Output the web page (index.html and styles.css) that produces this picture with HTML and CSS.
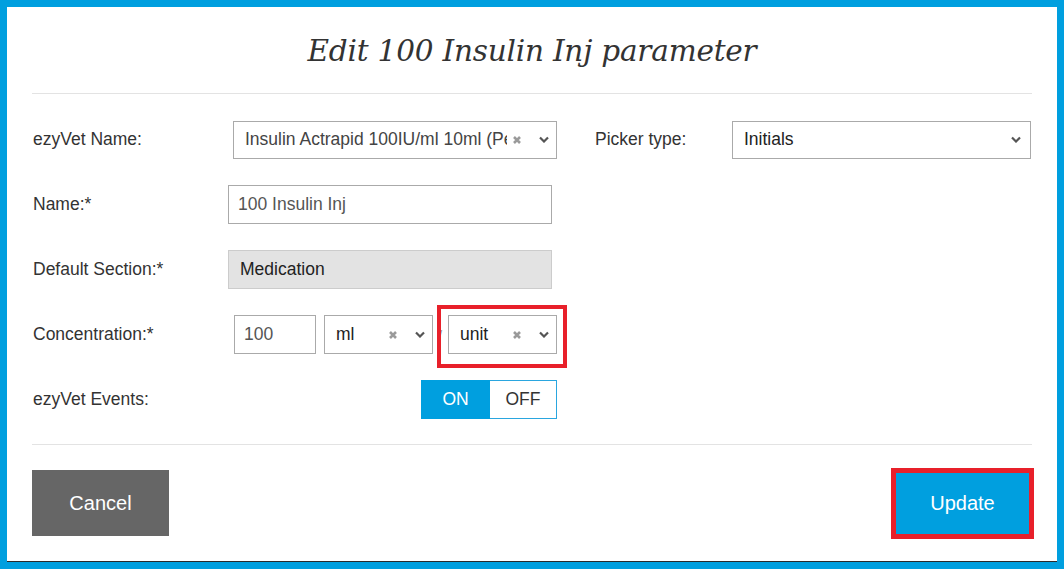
FILE: index.html
```html
<!DOCTYPE html>
<html>
<head>
<meta charset="utf-8">
<link rel="stylesheet" href="styles.css">
</head>
<body>
<div class="frame">
  <div class="dialog">
    <div class="header">
      <h1 class="title">Edit 100 Insulin Inj parameter</h1>
    </div>
    <div class="form">
      <div class="row">
        <label class="lbl">ezyVet Name:</label>
        <div class="sel sel-name">
          <span class="sel-text">Insulin Actrapid 100IU/ml 10ml (Pet)</span>
          <svg class="clr" viewBox="0 0 8 8"><path d="M1 1L7 7M7 1L1 7"/></svg>
          <svg class="chev" viewBox="0 0 10 7"><path d="M1 1.5L5 5.5L9 1.5"/></svg>
        </div>
        <label class="lbl lbl-picker">Picker type:</label>
        <div class="sel sel-picker">
          <span class="sel-text dark">Initials</span>
          <svg class="chev" viewBox="0 0 10 7"><path d="M1 1.5L5 5.5L9 1.5"/></svg>
        </div>
      </div>
      <div class="row">
        <label class="lbl">Name:*</label>
        <div class="inp inp-name">100 Insulin Inj</div>
      </div>
      <div class="row">
        <label class="lbl">Default Section:*</label>
        <div class="inp inp-disabled">Medication</div>
      </div>
      <div class="row">
        <label class="lbl">Concentration:*</label>
        <div class="conc">
          <div class="inp inp-num">100</div>
          <div class="sel sel-unit sel-ml">
            <span class="sel-text dark">ml</span>
            <svg class="clr" viewBox="0 0 8 8"><path d="M1 1L7 7M7 1L1 7"/></svg>
            <svg class="chev" viewBox="0 0 10 7"><path d="M1 1.5L5 5.5L9 1.5"/></svg>
          </div>
          <span class="slash">/</span>
          <div class="highlight">
            <div class="sel sel-unit">
              <span class="sel-text dark">unit</span>
              <svg class="clr" viewBox="0 0 8 8"><path d="M1 1L7 7M7 1L1 7"/></svg>
              <svg class="chev" viewBox="0 0 10 7"><path d="M1 1.5L5 5.5L9 1.5"/></svg>
            </div>
          </div>
        </div>
      </div>
      <div class="row">
        <label class="lbl">ezyVet Events:</label>
        <div class="toggle">
          <span class="tog tog-on">ON</span>
          <span class="tog tog-off">OFF</span>
        </div>
      </div>
    </div>
    <div class="footer">
      <button class="btn btn-cancel">Cancel</button>
      <button class="btn btn-update">Update</button>
    </div>
  </div>
</div>
</body>
</html>
```

FILE: styles.css
```css
html, body {
  margin: 0;
  padding: 0;
  background: #ffffff;
}
body {
  font-family: "Liberation Sans", Arial, sans-serif;
  color: #333;
}
.frame {
  width: 1064px;
  height: 569px;
  box-sizing: border-box;
  border: 7px solid #009fdf;
  background: #fff;
}
.dialog {
  height: 555px;
  box-sizing: border-box;
  border-bottom: 1px solid #2b2b2b;
  padding: 0 25px;
  display: flex;
  flex-direction: column;
}
.header {
  padding: 24px 0 22px;
  border-bottom: 1px solid #e3e3e3;
  text-align: center;
}
.title {
  margin: 0;
  font-family: "DejaVu Serif", "Liberation Serif", serif;
  font-style: italic;
  font-weight: normal;
  font-size: 29.5px;
  line-height: 40px;
  color: #333;
  letter-spacing: -0.2px;
}
.form {
  padding: 26px 0 0;
  display: flex;
  flex-direction: column;
  gap: 26px;
  border-bottom: 1px solid #e3e3e3;
  padding-bottom: 25px;
}
.row {
  display: flex;
  align-items: center;
  height: 39px;
}
.lbl {
  width: 196px;
  flex: none;
  padding-left: 1px;
  box-sizing: border-box;
  font-size: 17.5px;
  color: #333;
}
.lbl-picker {
  width: 137px;
  margin-left: 38px;
  padding-left: 0;
}
.sel {
  display: flex;
  align-items: center;
  box-sizing: border-box;
  height: 39px;
  border: 1px solid #aaa;
  background: #fff;
  padding: 0 7px 0 11px;
  font-size: 17.5px;
  color: #444;
}
.sel-text {
  flex: 1;
  overflow: hidden;
  white-space: nowrap;
}
.sel-text.dark {
  color: #222;
}
.sel-name {
  width: 324px;
  margin-left: 5px;
  height: 38px;
}
.sel-name .sel-text {
  color: #444;
}
.sel-picker {
  width: 299px;
  height: 38px;
  padding-right: 9px;
}
.clr {
  width: 8px;
  height: 8px;
  flex: none;
  margin: 0 18px 0 6px;
  stroke: #9a9a9a;
  stroke-width: 2.6;
  fill: none;
}
.chev {
  width: 10px;
  height: 7px;
  flex: none;
  stroke: #555;
  stroke-width: 2.2;
  fill: none;
}
.inp {
  box-sizing: border-box;
  height: 39px;
  border: 1px solid #aaa;
  display: flex;
  align-items: center;
  font-size: 17.5px;
}
.inp-name {
  width: 324px;
  padding-left: 9px;
  color: #555;
}
.inp-disabled {
  width: 324px;
  padding-left: 11px;
  background: #e3e3e3;
  border-color: #ccc;
  color: #222;
}
.conc {
  display: flex;
  align-items: center;
  margin-left: 6px;
}
.inp-num {
  width: 82px;
  padding-left: 9px;
  color: #555;
}
.sel-unit {
  width: 109px;
}
.sel-ml {
  margin-left: 8px;
}
.slash {
  width: 15px;
  text-align: center;
  font-size: 12px;
  color: #888;
}
.highlight {
  position: relative;
}
.highlight::after {
  content: "";
  position: absolute;
  left: -11px;
  right: -10px;
  top: -10px;
  bottom: -14px;
  border: 4px solid #e8202a;
  pointer-events: none;
}
.toggle {
  margin-left: 193px;
  display: flex;
  height: 39px;
  box-sizing: border-box;
  border: 1px solid #2aa6df;
}
.tog {
  display: flex;
  align-items: center;
  justify-content: center;
  font-size: 17.5px;
}
.tog-on {
  width: 69px;
  background: #009fdf;
  color: #fff;
  margin: -1px 0 -1px -1px;
}
.tog-off {
  width: 66px;
  color: #333;
}
.footer {
  flex: 1;
  display: flex;
  justify-content: space-between;
  align-items: center;
  padding: 0 3px 0 0;
}
.btn {
  border: none;
  font-family: "Liberation Sans", Arial, sans-serif;
  font-size: 20px;
  color: #fff;
  cursor: pointer;
}
.btn-cancel {
  width: 137px;
  height: 66px;
  background: #666;
}
.btn-update {
  width: 133px;
  height: 61px;
  background: #009fdf;
  outline: 5px solid #e8202a;
}
```
